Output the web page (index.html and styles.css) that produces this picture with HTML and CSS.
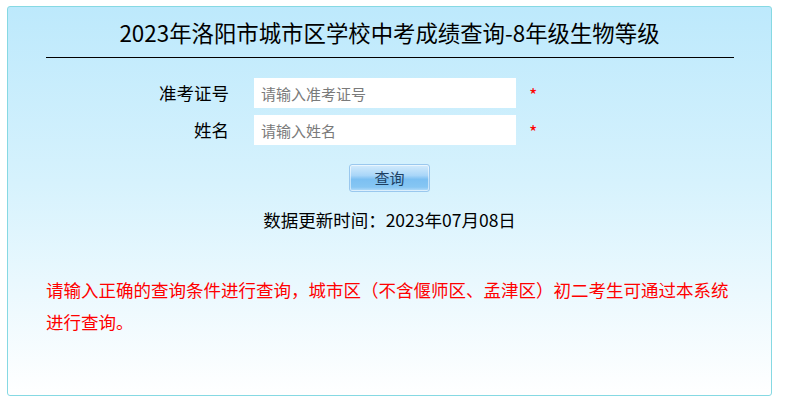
FILE: index.html
```
<!DOCTYPE html>
<html lang="zh-CN">
<head>
<meta charset="utf-8">
<title>成绩查询</title>
<link rel="stylesheet" href="styles.css">
</head>
<body>
<div class="panel">
  <h1 class="title">2023年洛阳市城市区学校中考成绩查询-8年级生物等级</h1>
  <div class="rule"></div>
  <form class="form">
    <div class="row">
      <label class="label" for="zkzh">准考证号</label>
      <input class="field" id="zkzh" type="text" placeholder="请输入准考证号">
      <span class="req">*</span>
    </div>
    <div class="row">
      <label class="label" for="xm">姓名</label>
      <input class="field" id="xm" type="text" placeholder="请输入姓名">
      <span class="req">*</span>
    </div>
    <div class="actions">
      <button class="btn" type="button">查询</button>
    </div>
  </form>
  <p class="update">数据更新时间：2023年07月08日</p>
  <p class="notice">请输入正确的查询条件进行查询，城市区（不含偃师区、孟津区）初二考生可通过本系统进行查询。</p>
</div>
</body>
</html>
```
FILE: styles.css
```
html, body {
  margin: 0;
  padding: 0;
  background: #ffffff;
}
body {
  font-family: "Noto Sans CJK SC", "Noto Sans", sans-serif;
  color: #000;
}
.panel {
  box-sizing: border-box;
  width: 765px;
  height: 390px;
  margin: 6px 0 0 7px;
  border: 1px solid #86d9e3;
  border-radius: 3px;
  background: linear-gradient(to bottom, #bde9fc 0%, #d6f2fd 45%, #ffffff 100%);
}
.title {
  margin: 0;
  padding-top: 10px;
  font-size: 22.4px;
  font-weight: normal;
  line-height: 30px;
  text-align: center;
}
.rule {
  height: 1px;
  margin: 10px 37px 0 38px;
  background: #000;
}
.form {
  margin: 20px 0 0;
}
.row {
  display: flex;
  align-items: center;
  height: 30px;
  margin-bottom: 7px;
}
.label {
  width: 100px;
  margin-left: 121px;
  text-align: right;
  font-size: 17.5px;
  line-height: 30px;
}
.field {
  box-sizing: border-box;
  width: 262px;
  height: 30px;
  margin: 0 0 0 25px;
  padding: 0 7px;
  border: none;
  background: #fff;
  font-family: "Noto Sans CJK SC", "Noto Sans", sans-serif;
  font-size: 15px;
  outline: none;
}
.field::placeholder {
  color: #7a7a7a;
}
.req {
  margin-left: 13px;
  color: #ff0000;
  font-size: 18px;
  line-height: 30px;
  position: relative;
  top: 1px;
}
.actions {
  display: flex;
  justify-content: center;
  padding-top: 12px;
}
.btn {
  box-sizing: border-box;
  width: 81px;
  height: 28px;
  border: 1px solid #9ac8ee;
  border-radius: 3px;
  background: linear-gradient(to bottom, #d3ebfc 0%, #a9d6f8 40%, #7cc0f2 55%, #86c6f3 85%, #b9defa 100%);
  box-shadow: inset 0 0 0 1px rgba(255,255,255,0.55);
  color: #1d3f63;
  font-family: "Noto Sans CJK SC", "Noto Sans", sans-serif;
  font-size: 15px;
  line-height: 24px;
  padding: 0;
}
.update {
  margin: 16px 0 0;
  text-align: center;
  font-size: 17.5px;
  line-height: 24px;
}
.notice {
  margin: 42px 37px 0 38px;
  color: #ff0000;
  font-size: 17.5px;
  line-height: 32px;
}
```
